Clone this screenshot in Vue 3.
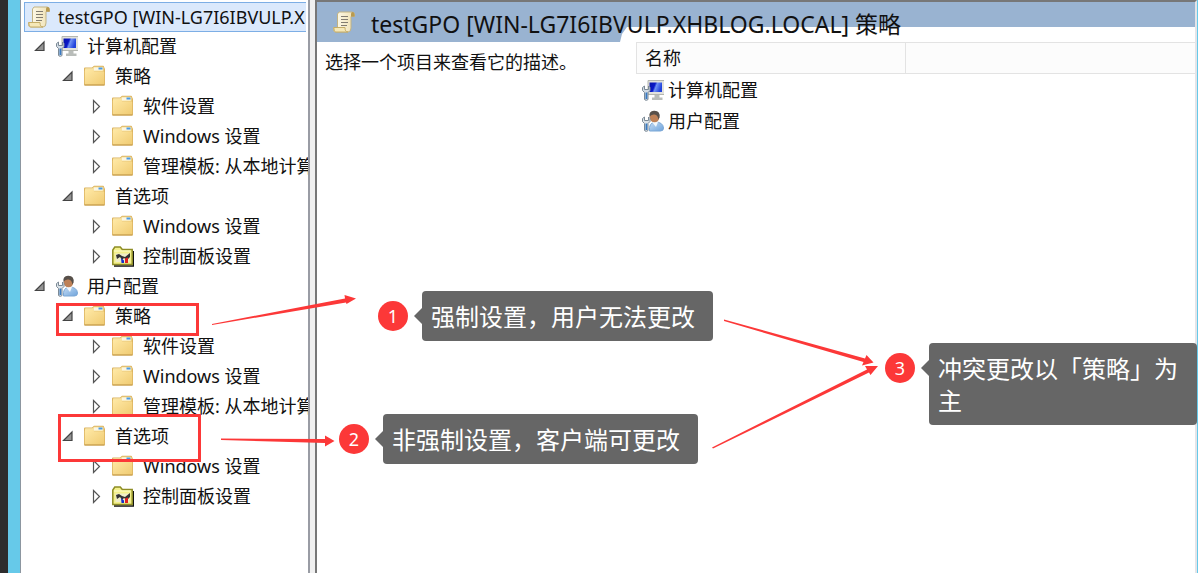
<script setup>
import { ref } from "vue";

const folderGroup = (id, name, children) => ({
  id,
  name,
  icon: "folder",
  open: ref(true),
  children,
});

const policyItems = [
  { name: "软件设置", icon: "folder" },
  { name: "Windows 设置", icon: "folder" },
  { name: "管理模板: 从本地计算", icon: "folder" },
];
const preferenceItems = [
  { name: "Windows 设置", icon: "folder" },
  { name: "控制面板设置", icon: "panel" },
];

const tree = ref([
  {
    id: "computer",
    name: "计算机配置",
    icon: "computer",
    open: true,
    children: [
      folderGroup("c1", "策略", policyItems),
      folderGroup("c2", "首选项", preferenceItems),
    ],
  },
  {
    id: "user",
    name: "用户配置",
    icon: "user",
    open: true,
    children: [
      folderGroup("u1", "策略", policyItems),
      folderGroup("u2", "首选项", preferenceItems),
    ],
  },
]);

const toggle = (item) => {
  item.open = !item.open;
};
</script>

<template>
  <div class="desktop">
    <!-- icon shapes -->
    <svg class="sprite" aria-hidden="true">
      <defs>
        <linearGradient id="gold" x1="0" y1="0" x2="1" y2="1">
          <stop offset="0" stop-color="#ffe9a6" />
          <stop offset="1" stop-color="#f0cb72" />
        </linearGradient>
        <linearGradient id="screen" x1="0" y1="0" x2="1" y2="0.3">
          <stop offset="0" stop-color="#0713a8" />
          <stop offset="0.45" stop-color="#0a18c8" />
          <stop offset="0.6" stop-color="#6f92f4" />
          <stop offset="1" stop-color="#2243dc" />
        </linearGradient>
        <linearGradient id="paper" x1="0" y1="0" x2="1" y2="0">
          <stop offset="0" stop-color="#fffdf2" />
          <stop offset="1" stop-color="#efe0b0" />
        </linearGradient>
        <linearGradient id="shirt" x1="0" y1="0" x2="1" y2="1">
          <stop offset="0" stop-color="#c5dcf4" />
          <stop offset="1" stop-color="#6fa4dc" />
        </linearGradient>
      </defs>
      <symbol id="scroll" viewBox="0 0 22 22">
        <path d="M6 1h13q2.500 0 2.500 2.500v2h-3.500v11.500q0 4-3 4H2.500q-2 0-2-2.500v-2H4.500V3z" fill="url(#paper)" stroke="#c2b384" />
        <path d="M18 5.500V3q0-2 1.500-2t2 2v2.500z" fill="#b89a50" />
        <path d="M.8 16.500h11.200q0 4.500 3 4.500H2.800q-2 0-2-4.500z" fill="#f5e8b8" stroke="#c5ad68" />
        <path d="M8 5.500h7M8 8.500h7M8 11.500h7M8 14.500h6" stroke="#827c70" />
      </symbol>
      <symbol id="folder" viewBox="0 0 22 22">
        <path d="M0 3.500q0-1 1-1h7L10 .8h9q1 0 1 1L21 4v15q0 1.500-1 1.500H1q-1 0-1-1.500z" fill="#dcb460" />
        <path d="M1 4q0-.8.800-.8H8.500l1.500-1.500h8.500q1 0 1 1V6H1z" fill="#f7e2a2" />
        <path d="M10 2.500h8.500v3H10z" fill="#fbf6e2" />
        <path d="M14.500 2.500h4v2h-4z" fill="#4a9ae4" />
        <path d="M.800 6q0-1.200 1-1.200h7L10 6.200h9.200q1 0 1 1v11.300q0 1-1 1H1.800q-1 0-1-1z" fill="url(#gold)" />
        <path d="M.500 20h20" stroke="#c39a4a" />
      </symbol>
      <symbol id="panel" viewBox="0 0 22 22">
        <path d="M2 21h19.500V6" fill="none" stroke="#111" stroke-width="1.500" />
        <path d="M.800 19.500V5l2-3h5.500l2 2.500h9.900v15z" fill="#f3f08b" stroke="#8e8d25" stroke-width="1.500" />
        <path d="M2 6h16.500" stroke="#fffed0" />
        <path d="M3.500 8.500h14v8.500h-14z" fill="#efedc8" />
        <path d="M4 10l3-1 3 2 3 1 5-4v4l-3 3-3-2-2 2-2-3-3 2z" fill="#333" />
        <path d="M9 13l3 2.500V18H9.500z" fill="#1230cc" />
        <path d="M13 13.500l3-1V18h-3z" fill="#e02020" />
      </symbol>
      <symbol id="computer" viewBox="0 0 22 22">
        <path d="M6 1.500h16.500v14H6z" fill="#e2e2dc" stroke="#b4b6b0" />
        <path d="M7.500 3.500h12.500v9.500H7.500z" fill="url(#screen)" />
        <path d="M12.500 16h5v2.500h3V21H10v-2.500h2.500z" fill="#b9bdba" />
        <path d="M.5 8.500v3l2 2v6.500q0 1.300 1.800 1.300T6 20v-6.500l2-2v-3L6.500 7v3.500h-4V7z" fill="#d3dce5" stroke="#7c8a96" />
        <path d="M3.500 13.500h1.800v6.500H3.500z" fill="#397ac2" />
      </symbol>
      <symbol id="user" viewBox="0 0 22 22">
        <path d="M7.500 21q-1-8 5.500-9 8 0 8.500 6 0 3-3 3z" fill="url(#shirt)" stroke="#7ba7d5" />
        <path d="M10 12l4 5 2-5z" fill="#f2f7fb" />
        <circle cx="12.500" cy="7.500" r="4.800" fill="#be8157" />
        <path d="M7.500 7Q6.500 1 12 .8q6.500-.3 5.500 6.700l-1.200 2Q16 5 12.500 4.500 9 4 7.500 7z" fill="#57504a" />
        <path d="M.5 8.500v3l2 2v6.500q0 1.300 1.800 1.300T6 20v-6.500l2-2v-3L6.500 7v3.500h-4V7z" fill="#dce3e8" stroke="#7c8a96" />
        <path d="M3.500 13.500h1.800v6.500H3.500z" fill="#397ac2" />
      </symbol>
      <symbol id="opened" viewBox="0 0 16 16">
        <path d="M12 4v8.500H3.500z" fill="#949494" stroke="#444" stroke-width="1.200" />
      </symbol>
      <symbol id="closed" viewBox="0 0 16 16">
        <path d="M5.500 2.500l6 6-6 6z" fill="#fff" stroke="#555" stroke-width="1.200" />
      </symbol>
    </svg>

    <nav class="tree-pane">
      <div class="root">
        <svg class="icon"><use href="#scroll" /></svg>
        <span>testGPO [WIN-LG7I6IBVULP.X</span>
      </div>
      <ul class="tree">
        <li v-for="top in tree" :key="top.id">
          <div class="row">
            <button class="toggle" :aria-label="top.name" @click="toggle(top)">
              <svg><use :href="top.open ? '#opened' : '#closed'" /></svg>
            </button>
            <svg class="icon"><use :href="'#' + top.icon" /></svg>
            <span>{{ top.name }}</span>
          </div>
          <ul v-if="top.open">
            <li v-for="group in top.children" :key="group.id">
              <div class="row">
                <button class="toggle" :aria-label="group.name" @click="toggle(group)">
                  <svg><use :href="group.open ? '#opened' : '#closed'" /></svg>
                </button>
                <svg class="icon"><use :href="'#' + group.icon" /></svg>
                <span>{{ group.name }}</span>
              </div>
              <ul v-if="group.open">
                <li v-for="item in group.children" :key="item.name" class="row">
                  <button class="toggle" :aria-label="item.name">
                    <svg><use href="#closed" /></svg>
                  </button>
                  <svg class="icon"><use :href="'#' + item.icon" /></svg>
                  <span>{{ item.name }}</span>
                </li>
              </ul>
            </li>
          </ul>
        </li>
      </ul>
    </nav>

    <main class="detail">
      <header class="title">
        <svg class="icon"><use href="#scroll" /></svg>
        <h1>testGPO [WIN-LG7I6IBVULP.XHBLOG.LOCAL] 策略</h1>
      </header>
      <div class="content">
        <p class="description">选择一个项目来查看它的描述。</p>
        <table class="list">
          <thead>
            <tr>
              <th class="name">名称</th>
              <th></th>
            </tr>
          </thead>
          <tbody>
            <tr v-for="top in tree" :key="top.id">
              <td colspan="2">
                <div class="entry">
                  <svg class="icon"><use :href="'#' + top.icon" /></svg>
                  <span>{{ top.name }}</span>
                </div>
              </td>
            </tr>
          </tbody>
        </table>
      </div>
    </main>

    <!-- notes drawn over the window -->
    <svg class="arrows" aria-hidden="true">
      <path d="M212 324L345 298.500 344.500 295 356 298.500 346.500 304 346 302.500 212 325z" />
      <path d="M221 438.500L325 439V435.500l9.500 5.500-9.500 5.500v-3.500L221 440z" />
      <path d="M724 319.500L865 358.500 866.500 355 873.500 362.500 862 365.500 863.500 362 724 321z" />
      <path d="M712 447.500L867 369.500 865 366 878 366 870.500 375 869 372.500 713 448.500z" />
    </svg>
    <div class="mark policy-mark"></div>
    <div class="mark preference-mark"></div>
    <div class="note note-1">
      <span class="badge">1</span>
      <p class="bubble">强制设置，用户无法更改</p>
    </div>
    <div class="note note-2">
      <span class="badge">2</span>
      <p class="bubble">非强制设置，客户端可更改</p>
    </div>
    <div class="note note-3">
      <span class="badge">3</span>
      <p class="bubble">冲突更改以「策略」为主</p>
    </div>
  </div>
</template>

<style>
body {
  margin: 0;
  background-color: #fff;
}
</style>

<style scoped>
.desktop {
  position: relative;
  display: flex;
  box-sizing: border-box;
  min-height: 100vh;
  overflow: hidden;
  border-left: 8px solid #2d2d2d;
  background-color: #f0f0f0;
  color: #111;
  font-family: "Noto Sans", "Noto Sans CJK SC", sans-serif;
  font-size: 18px;
  line-height: 30px;
}
.sprite {
  position: absolute;
  width: 0;
  height: 0;
}
.icon {
  flex: none;
  width: 22px;
  height: 22px;
}
.tree-pane {
  flex: none;
  box-sizing: border-box;
  width: 302px;
  padding-right: 2px;
  overflow: hidden;
  white-space: nowrap;
  background-color: #fff;
  border-left: 12px solid #66c9e9;
  border-right: 2px solid #999ca4;
  box-shadow: inset 1px 0 #8c96a0;
}
.root {
  display: flex;
  align-items: center;
  gap: 8px;
  box-sizing: border-box;
  height: 30px;
  margin: 2px 0 0 4px;
  padding-left: 3px;
  overflow: hidden;
  background-color: #dbe9fc;
  border: 1px solid #7daee5;
  border-right: none;
}
.tree {
  margin-top: -1px;
}
ul {
  margin: 0;
  padding: 0;
  list-style-type: none;
}
.tree ul {
  padding-left: 28px;
}
.row {
  display: flex;
  align-items: center;
  height: 30px;
  gap: 8px;
}
.tree > li > .row,
.tree > li > ul {
  margin-left: 12px;
}
.toggle {
  flex: none;
  width: 16px;
  height: 16px;
  padding: 0;
  border: none;
  background: none;
}
.toggle svg {
  display: block;
  width: 16px;
  height: 16px;
}
.row .icon {
  margin-right: 1px;
}
.detail {
  flex: 1;
  min-width: 0;
  margin-left: 5px;
  margin-right: 1px;
  background-color: #fff;
  border-top: 2px solid #777;
  border-left: 2px solid #777;
  border-right: 2px solid #e4e4e8;
  box-shadow: 1px 0 #66c9e9;
}
.title {
  position: relative;
  display: flex;
  align-items: center;
  gap: 16px;
  height: 40px;
  padding-left: 16px;
}
/* the bar is lower on the left, above the description */
.title::before {
  content: "";
  position: absolute;
  inset: 0;
  background-color: #99b3d1;
  clip-path: polygon(0 0, 100% 0, 100% 25px, 310px 25px, 305px 32px, 303px 40px, 0 40px);
}
.title .icon,
.title h1 {
  position: relative;
}
.title h1 {
  margin: 0;
  padding-top: 4px;
  font-size: 23px;
  font-weight: 400;
  white-space: nowrap;
}
.content {
  display: flex;
  align-items: flex-start;
}
.description {
  flex: none;
  width: 311px;
  margin: 0;
  padding: 5px 0 0 8px;
}
.list {
  flex: 1;
  border-collapse: separate;
  border-spacing: 0;
}
.list th {
  box-sizing: border-box;
  height: 32px;
  padding: 0;
  background-color: #fcfcfc;
  border-top: 1px solid #e3e3e3;
  border-bottom: 1px solid #e3e3e3;
}
.list .name {
  width: 270px;
  padding-left: 8px;
  font-weight: 400;
  text-align: left;
  border-left: 1px solid #e3e3e3;
  border-right: 1px solid #e3e3e3;
}
.list td {
  height: 31px;
  padding: 0 0 0 6px;
}
.entry {
  display: flex;
  align-items: center;
  gap: 4px;
}
.arrows {
  position: absolute;
  top: 0;
  left: -8px;
  width: 1198px;
  height: 573px;
  fill: #fc3838;
}
.mark {
  position: absolute;
  box-sizing: border-box;
  border: 3px solid #fc3838;
}
.policy-mark {
  left: 48px;
  top: 303px;
  width: 143px;
  height: 33px;
}
.preference-mark {
  left: 50px;
  top: 414px;
  width: 143px;
  height: 48px;
}
.note {
  position: absolute;
  display: flex;
  align-items: flex-start;
  gap: 14px;
}
.note-1 {
  left: 370px;
  top: 291px;
}
.note-2 {
  left: 331px;
  top: 414px;
}
.note-3 {
  left: 877px;
  top: 343px;
}
.badge {
  flex: none;
  width: 30px;
  height: 30px;
  margin-top: 10px;
  border-radius: 50%;
  background-color: #fc3838;
  color: #fff;
  text-align: center;
}
.bubble {
  position: relative;
  box-sizing: border-box;
  max-width: 268px;
  margin: 0;
  padding: 9px 18px 9px 9px;
  border-radius: 4px;
  background-color: #666;
  color: #fff;
  font-family: "Noto Sans CJK SC", sans-serif;
  font-size: 24px;
  line-height: 32px;
}
.note-1 .bubble,
.note-2 .bubble {
  max-width: none;
  white-space: nowrap;
}
.bubble::before {
  content: "";
  position: absolute;
  left: -8px;
  top: 17px;
  border: 8px solid transparent;
  border-left: none;
  border-right-color: #666;
}
</style>
